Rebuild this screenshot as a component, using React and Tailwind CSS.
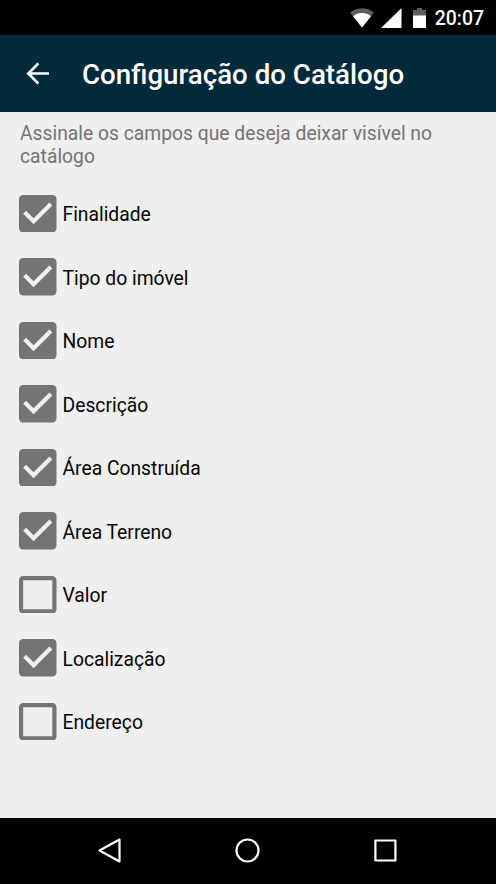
import React, { useState } from "react";

const initialFields = [
    { id: "finalidade", label: "Finalidade", checked: true },
    { id: "tipo", label: "Tipo do imóvel", checked: true },
    { id: "nome", label: "Nome", checked: true },
    { id: "descricao", label: "Descrição", checked: true },
    { id: "areaConstruida", label: "Área Construída", checked: true },
    { id: "areaTerreno", label: "Área Terreno", checked: true },
    { id: "valor", label: "Valor", checked: false },
    { id: "localizacao", label: "Localização", checked: true },
    { id: "endereco", label: "Endereço", checked: false },
];

const StatusBar = () => (
    <div className="flex h-[35px] shrink-0 items-center justify-end bg-black pr-[12px] text-white">
        <svg width="24" height="20" viewBox="0 0 24 20" className="mr-[7px]">
            <path d="M0 4.5C6.5-1.2 17.5-1.2 24 4.5L12 19.5z" fill="#5c5c5c" />
            <path d="M3 8.2C8 4 16 4 21 8.2L12 19.5z" fill="#fff" />
        </svg>
        <svg width="21" height="20" viewBox="0 0 21 20" className="mr-[11px]">
            <path d="M20.5 0V20H0z" fill="#fff" />
        </svg>
        <svg width="13" height="20" viewBox="0 0 13 20" className="mr-[9px]">
            <path d="M4 0h5v2h4v6H0V2h4z" fill="#5c5c5c" />
            <path d="M0 7.5h13V20H0z" fill="#fff" />
        </svg>
        <span className="mt-[2px] text-[19.4px] leading-none font-medium">20:07</span>
    </div>
);

const CheckIcon = ({ checked }) => (
    <svg width="37.5" height="37.5" viewBox="3 3 18 18" className="shrink-0">
        {checked ? (
            <>
                <rect x="3" y="3" width="18" height="18" rx="2" fill="#747474" />
                <path d="M10 17l-5-5 1.41-1.41L10 14.17l7.59-7.59L19 8z" fill="#efefef" />
            </>
        ) : (
            <path
                d="M19 5v14H5V5h14m0-2H5c-1.1 0-2 .9-2 2v14c0 1.1.9 2 2 2h14c1.1 0 2-.9 2-2V5c0-1.1-.9-2-2-2z"
                fill="#747474"
            />
        )}
    </svg>
);

const NavigationBar = () => (
    <div className="flex h-[66.5px] shrink-0 items-center justify-center gap-[110px] bg-black">
        <button aria-label="Voltar">
            <svg width="28" height="28" viewBox="0 0 28 28" fill="none" stroke="#fff" strokeWidth="2.2" strokeLinejoin="round">
                <path d="M3.5 13.5L23.5 2.5V24.5z" />
            </svg>
        </button>
        <button aria-label="Início">
            <svg width="28" height="28" viewBox="0 0 28 28" fill="none" stroke="#fff" strokeWidth="2.2">
                <circle cx="13.5" cy="13.5" r="11" />
            </svg>
        </button>
        <button aria-label="Recentes">
            <svg width="28" height="28" viewBox="0 0 28 28" fill="none" stroke="#fff" strokeWidth="2.2" strokeLinejoin="round">
                <rect x="3.4" y="3.5" width="20" height="20" />
            </svg>
        </button>
    </div>
);

const App = () => {
    const [fields, setFields] = useState(initialFields);

    const toggleField = (id) => {
        setFields(fields.map((f) => (f.id === id ? { ...f, checked: !f.checked } : f)));
    };

    return (
        <div className="flex h-[884px] w-[496px] flex-col overflow-hidden bg-[#efefef] font-[Roboto,sans-serif]">
            <StatusBar />

            <header className="flex h-[77px] shrink-0 items-center bg-[#032a3a] text-white">
                <button className="ml-[26px]" aria-label="Voltar">
                    <svg width="24" height="24" viewBox="0 0 24 24" fill="none" stroke="#fff" strokeWidth="2.6">
                        <path d="M23 11.5H2.5M12.3 1.5L2.3 11.5l10 10" />
                    </svg>
                </button>
                <h1 className="mt-[3px] ml-[32px] text-[27.7px] leading-none font-medium">Configuração do Catálogo</h1>
            </header>

            <main className="flex-1 pt-[10px] pl-[20px]">
                <p className="w-[440px] text-[19.3px] leading-[23px] text-[#747474]">
                    Assinale os campos que deseja deixar visível no catálogo
                </p>

                {/* Lista de campos do catálogo */}
                <ul className="mt-[13.8px] -ml-px">
                    {fields.map((field) => (
                        <li key={field.id} className="flex h-[63.5px] items-center">
                            <label className="flex items-center gap-[6px]">
                                <input
                                    type="checkbox"
                                    className="sr-only"
                                    checked={field.checked}
                                    onChange={() => toggleField(field.id)}
                                />
                                <CheckIcon checked={field.checked} />
                                <span className="mt-[3px] text-[19.3px] leading-none text-[#050505]">{field.label}</span>
                            </label>
                        </li>
                    ))}
                </ul>
            </main>

            <NavigationBar />
        </div>
    );
};

export default App;
